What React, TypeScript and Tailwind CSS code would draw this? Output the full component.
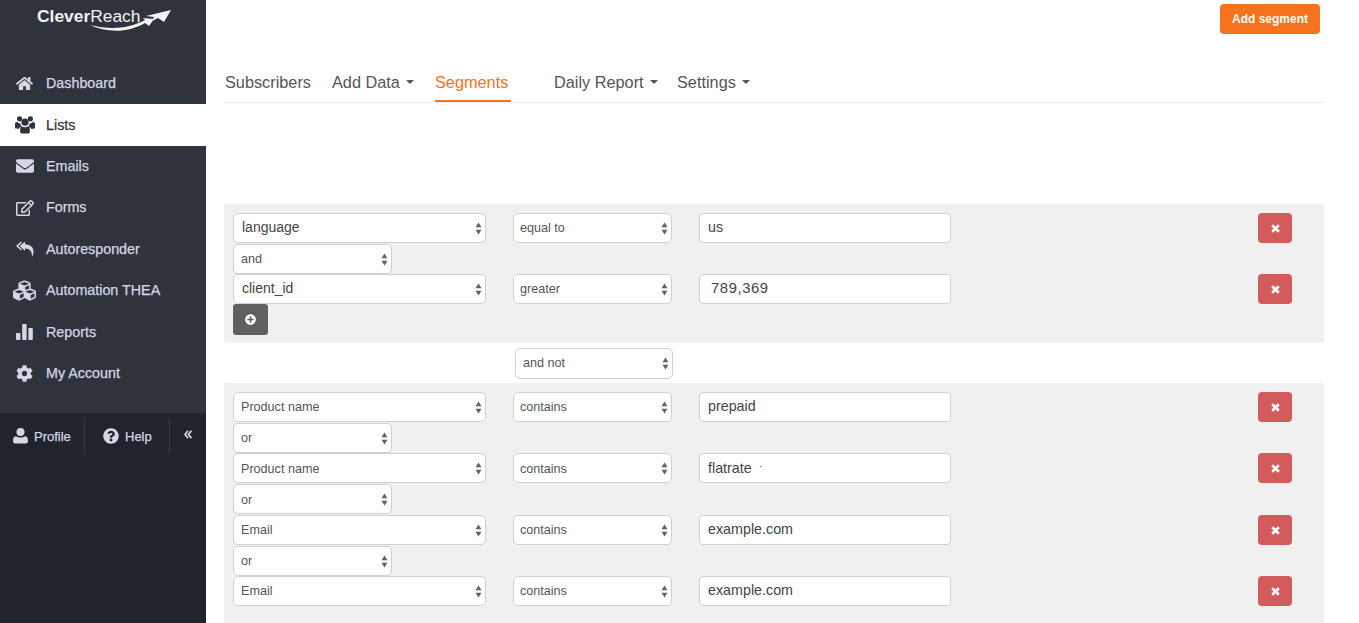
import React from "react";
import { FaHome, FaEnvelope, FaRegEdit, FaCubes, FaCog, FaQuestionCircle, FaPlusCircle } from "react-icons/fa";

const Arrows = () => (
  <svg width="7" height="13" viewBox="0 0 7 13" className="shrink-0" fill="#5f6367">
    <path d="M3.5 0.5 L6.5 5.2 H0.5 Z" />
    <path d="M3.5 12.5 L6.5 7.8 H0.5 Z" />
  </svg>
);

const XIcon = () => (
  <svg width="9" height="9" viewBox="0 0 9 9" stroke="#fff" strokeWidth="2.7" strokeLinecap="butt">
    <path d="M1.2 1.2 L7.8 7.8 M7.8 1.2 L1.2 7.8" />
  </svg>
);

function Select({ label, cls, text }: { label: string; cls: string; text: string }) {
  return (
    <div className={`flex items-center justify-between bg-white border border-[#d0d0d0] rounded-[5px] pr-[3px] ${cls}`}>
      <span className={`truncate ${text}`}>{label}</span>
      <Arrows />
    </div>
  );
}

function Row({ field, op, value, dark, low, valueCls }: { field: string; op: string; value: React.ReactNode; dark?: boolean; low?: string; valueCls?: string }) {
  return (
    <div className="flex items-start h-[30px]">
      <Select
        label={field}
        cls={`w-[253px] h-[30px] ${dark ? "pl-2" : "pl-[7px]"}`}
        text={dark ? "text-[14px] text-[#444] pb-[2px]" : `text-[12.6px] text-[#555] ${low ?? ""}`}
      />
      <Select label={op} cls="w-[159px] h-[30px] ml-[27px] pl-[6px]" text={`text-[12.6px] text-[#555] ${low ?? ""}`} />
      <div className={`w-[252px] h-[30px] ml-[27px] flex items-center bg-white border border-[#d0d0d0] rounded-[4px] text-[14.3px] text-[#444] ${valueCls ?? "pl-2"}`}>
        {value}
      </div>
      <button className="w-[34px] h-[30px] ml-[307px] flex items-center justify-center bg-[#d45b5b] rounded-[4px]">
        <XIcon />
      </button>
    </div>
  );
}

const Conn = ({ label, cls, text }: { label: string; cls: string; text?: string }) => (
  <div className={`flex items-start ${cls}`}>
    <Select label={label} cls="w-[159px] h-[30px] mt-[1px] pl-[7px]" text={`text-[12.6px] text-[#555] ${text ?? "pt-[1px]"}`} />
  </div>
);

const BarsIcon = () => (
  <svg width="17" height="16" viewBox="0 0 17 16" fill="currentColor">
    <rect x="0" y="9" width="4.4" height="7" rx="0.8" />
    <rect x="6.2" y="0" width="4.4" height="16" rx="0.8" />
    <rect x="12.4" y="4" width="4.4" height="12" rx="0.8" />
  </svg>
);

const UsersIcon = () => (
  <svg width="20" height="18" viewBox="0 0 20 18" fill="currentColor">
    <circle cx="4.6" cy="2.8" r="2.6" />
    <circle cx="15.4" cy="2.8" r="2.6" />
    <circle cx="10" cy="6.2" r="3.6" />
    <path d="M0 8 C0 6.4 1 6 2 6 C3 7 4.2 7.6 5.4 7.4 C5.6 8.8 6 9.6 6.8 10.4 C5 10.8 4 11.8 3.6 13 C1.6 13 0 12.8 0 11.6 Z" />
    <path d="M20 8 C20 6.4 19 6 18 6 C17 7 15.8 7.6 14.6 7.4 C14.4 8.8 14 9.6 13.2 10.4 C15 10.8 16 11.8 16.4 13 C18.4 13 20 12.8 20 11.6 Z" />
    <path d="M5.2 12.6 C5.2 11 6 10.4 7 10.4 C8.6 11.4 11.4 11.4 13 10.4 C14 10.4 14.8 11 14.8 12.6 V15.4 C14.8 17 13.8 17.6 12.6 17.6 H7.4 C6.2 17.6 5.2 17 5.2 15.4 Z" />
  </svg>
);

const ReplyAllIcon = () => (
  <svg width="18" height="16" viewBox="0 0 18 16" fill="currentColor">
    <path d="M5 0.5 L6 1.5 L2.4 5 L6 8.6 L5 9.6 L0 5 Z" />
    <path d="M9 0.5 V3.2 C14.5 3.4 17.6 6.4 17.6 10.6 C17.6 12.6 17 14.4 16 15.8 C16.2 11.6 14.4 7.6 9 7.6 V10 L3.8 5 Z" />
  </svg>
);

const UserIcon = () => (
  <svg width="15" height="16" viewBox="0 0 15 16" fill="currentColor">
    <circle cx="7.5" cy="4" r="4" />
    <path d="M0 12.4 C0 9.8 1 8.4 3 8.2 C5.6 10 9.4 10 12 8.2 C14 8.4 15 9.8 15 12.4 C15 14.6 13.8 15.6 12 15.6 H3 C1.2 15.6 0 14.6 0 12.4 Z" />
  </svg>
);

const DoubleLeft = () => (
  <svg width="8" height="9" viewBox="0 0 8 9" fill="none" stroke="currentColor" strokeWidth="1.7">
    <path d="M4 0.8 L1 4.5 L4 8.2 M7.4 0.8 L4.4 4.5 L7.4 8.2" />
  </svg>
);

const nav: { label: string; icon: React.ReactNode; active?: boolean; size: string; text?: string }[] = [
  { label: "Dashboard", icon: <FaHome />, size: "text-[17px]" },
  { label: "Lists", icon: <UsersIcon />, active: true, size: "text-[20px]", text: "pt-[2px]" },
  { label: "Emails", icon: <FaEnvelope />, size: "text-[18px]" },
  { label: "Forms", icon: <FaRegEdit />, size: "text-[18px]" },
  { label: "Autoresponder", icon: <ReplyAllIcon />, size: "text-[18px]" },
  { label: "Automation THEA", icon: <FaCubes />, size: "text-[23px]" },
  { label: "Reports", icon: <BarsIcon />, size: "text-[18px]", text: "pt-[2px]" },
  { label: "My Account", icon: <FaCog />, size: "text-[17px]" },
];

const Tab = ({ label, caret, active, cls }: { label: string; caret?: boolean; active?: boolean; cls: string }) => (
  <div className={`h-[35px] flex items-start gap-[6px] pt-[3px] -mb-px ${cls} ${active ? "text-[#f4731c] border-b-2 border-[#f4731c]" : "text-[#555]"}`}>
    <span>{label}</span>
    {caret && <span className="mt-[10px] w-0 h-0 border-x-[4px] border-x-transparent border-t-[4px] border-t-[#555]" />}
  </div>
);

export default function App() {
  return (
    <div className="flex w-[1359px] h-[623px] overflow-hidden bg-white font-['Liberation_Sans',Arial,sans-serif]">
      <aside className="w-[206px] shrink-0 flex flex-col bg-[#20242c]">
        <div className="h-[413px] bg-[#2f333b] shrink-0">
          <div className="h-[62px] relative">
            <div className="absolute left-[37px] top-[6px] text-[17.4px] leading-[20px] text-[#f2f3f5]">
              <b>Clever</b>Reach
            </div>
            <svg className="absolute left-0 top-0" width="206" height="40" viewBox="0 0 206 40" fill="#f2f3f5">
              <path d="M90 25 C106 32 126 34 145 23 L149 26 L154 19 L143 18 L145 20 C128 29 110 30 90 25 Z" />
              <path d="M146 16 L171 10 L164 22 L158 18 L152 21 L154 17 Z" />
            </svg>
          </div>
          <nav className="pt-[1px]">
            {nav.map((n) => (
              <div
                key={n.label}
                className={`h-[41.4px] flex items-center ${n.active ? "bg-white text-[#2f333b]" : "text-[#d3d8e4]"}`}
              >
                <span className={`w-[46px] pl-[13px] flex justify-center shrink-0 pr-[10px] ${n.size}`}>{n.icon}</span>
                <span className={`text-[14.3px] [-webkit-text-stroke:0.25px] ${n.text ?? ""}`}>{n.label}</span>
              </div>
            ))}
          </nav>
        </div>
        <div className="h-[36px] mt-[5px] flex items-center text-[#d3d8e4] text-[13px]">
          <div className="w-[85px] h-full flex items-center pl-[13px] gap-[6px] border-r border-[#353942]">
            <UserIcon /> <span className="pt-[2px] [-webkit-text-stroke:0.25px]">Profile</span>
          </div>
          <div className="w-[85px] h-full flex items-center pl-[18px] gap-[6px] border-r border-[#353942]">
            <FaQuestionCircle className="text-[16px]" /> <span className="pt-[2px] [-webkit-text-stroke:0.25px]">Help</span>
          </div>
          <div className="w-[36px] flex justify-center pb-[4px]">
            <DoubleLeft />
          </div>
        </div>
      </aside>

      <main className="w-[1100px] ml-[18px] shrink-0">
        <div className="h-[38px] pt-1 flex justify-end pr-1">
          <button className="w-[100px] h-[30px] bg-[#f4731c] text-white rounded-[4px] text-[12px] font-bold">Add segment</button>
        </div>
        <div className="mt-[29px] h-[36px] flex text-[16.3px] border-b border-[#ececec]">
          <Tab label="Subscribers" cls="ml-px w-[107px]" />
          <Tab label="Add Data" caret cls="w-[103px]" />
          <Tab label="Segments" active cls="w-[76px]" />
          <Tab label="Daily Report" caret cls="ml-[43px] w-[123px]" />
          <Tab label="Settings" caret cls="" />
        </div>

        <section className="mt-[101px] bg-[#f0f0f0] rounded-[3px] px-[9px] pt-[9px] pb-[8px]">
          <Row field="language" op="equal to" value="us" dark />
          <Conn label="and" cls="h-[31px]" />
          <Row field="client_id" op="greater" value="789,369" dark valueCls="pl-[11px] text-[14.8px] tracking-[0.6px] pb-[2px]" />
          <button className="w-[35px] h-[31px] flex items-center justify-center bg-[#606060] rounded-[3px] text-white text-[11px]">
            <FaPlusCircle />
          </button>
        </section>

        <div className="pt-[5px] pb-[4px] pl-[291px]">
          <Select label="and not" cls="w-[158px] h-[31px] pl-[7px]" text="text-[12.6px] text-[#555]" />
        </div>

        <section className="bg-[#f0f0f0] rounded-t-[3px] px-[9px] pt-[9px] pb-[17px]">
          <Row field="Product name" op="contains" value="prepaid" />
          <Conn label="or" cls="h-[31px]" />
          <Row field="Product name" op="contains" value={<span className="pt-[2px]">flatrate <span className="text-[11px] ml-[3px] relative -top-[3px]">·</span></span>} low="pt-[2px]" />
          <Conn label="or" cls="h-[32px]" text="pt-[2px]" />
          <Row field="Email" op="contains" value="example.com" low="pt-[1px]" />
          <Conn label="or" cls="h-[31px]" />
          <Row field="Email" op="contains" value="example.com" low="pt-[1px]" />
        </section>
      </main>
    </div>
  );
}
